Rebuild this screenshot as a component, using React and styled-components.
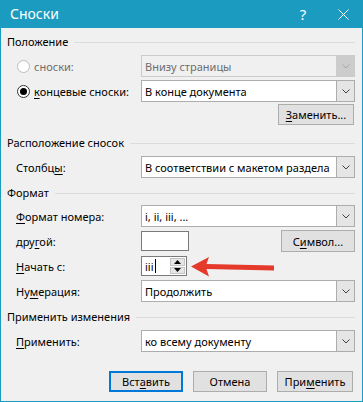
import React from "react"
import styled, { createGlobalStyle, css } from "styled-components"

const GlobalStyle = createGlobalStyle`
  html, body {
    margin: 0;
    padding: 0;
    background: #ffffff;
  }
  body {
    font-family: "Noto Sans", "Open Sans", sans-serif;
    font-size: 11px;
    color: #000;
  }
`

const accent = "#1a9bbf"

const Window = styled.div`
  position: relative;
  width: 363px;
  height: 402px;
  box-sizing: border-box;
  background: #f0f0f0;
  border: 1px solid ${accent};
  border-top: none;
  display: flex;
  flex-direction: column;
`

const TitleBar = styled.div`
  height: 28px;
  margin: 0 -1px;
  background: ${accent};
  color: #fff;
  display: flex;
  align-items: center;
  padding-left: 10px;
  font-size: 14px;
`

const Title = styled.div`
  flex: 1;
  margin-top: -1px;
`

const TitleButton = styled.div`
  width: ${({ w }) => w}px;
  height: 28px;
  display: flex;
  align-items: center;
  justify-content: center;
  font-size: 15px;
`

const Body = styled.div`
  padding: 7px 7px 0 6px;
  display: flex;
  flex-direction: column;
`

const GroupHeader = styled.div`
  display: flex;
  align-items: center;
  height: 14px;
  line-height: 14px;
  margin-top: ${({ mt }) => mt || 0}px;
  &::after {
    content: "";
    flex: 1;
    height: 1px;
    background: #dcdcdc;
    margin-left: 6px;
  }
`

const Row = styled.div`
  display: grid;
  grid-template-columns: 125px 214px;
  align-items: center;
  height: 22px;
  padding-left: 9px;
  margin-top: ${({ mt }) => mt || 0}px;
`

const Label = styled.div`
  display: flex;
  align-items: center;
  color: ${({ disabled }) => (disabled ? "#6d6d6d" : "#000")};
  white-space: nowrap;
  margin-left: ${({ ml }) => ml || 0}px;
`

const U = styled.span`
  text-decoration: underline;
  text-underline-offset: 2px;
`

const Radio = styled.span`
  width: 13px;
  height: 13px;
  box-sizing: border-box;
  border-radius: 50%;
  border: 1px solid ${({ disabled }) => (disabled ? "#bcbcbc" : "#333")};
  background: #fff;
  margin-right: 4px;
  display: flex;
  align-items: center;
  justify-content: center;
  &::after {
    content: "";
    width: 7px;
    height: 7px;
    border-radius: 50%;
    background: ${({ checked }) => (checked ? "#000" : "transparent")};
  }
`

const SelectBox = styled.div`
  height: 22px;
  box-sizing: border-box;
  display: flex;
  border: 1px solid ${({ disabled }) => (disabled ? "#cccccc" : "#adadad")};
  background: ${({ disabled }) => (disabled ? "#f0f0f0" : "#fff")};
  color: ${({ disabled }) => (disabled ? "#6d6d6d" : "#000")};
`

const SelectText = styled.div`
  flex: 1;
  padding-left: 3px;
  display: flex;
  align-items: center;
  white-space: nowrap;
  overflow: hidden;
`

const SelectArrow = styled.div`
  width: 17px;
  display: flex;
  align-items: center;
  justify-content: center;
  border-left: 1px solid ${({ disabled }) => (disabled ? "#cccccc" : "#adadad")};
  background: ${({ disabled }) => (disabled ? "#cccccc" : "#e5e5e5")};
  color: ${({ disabled }) => (disabled ? "#a8a8a8" : "#404040")};
`

const Chevron = () => (
  <svg width="8" height="5" viewBox="0 0 8 5">
    <path d="M0.5 0.5 L4 4 L7.5 0.5" fill="none" stroke="currentColor" strokeWidth="1" />
  </svg>
)

const Select = ({ value, disabled }) => (
  <SelectBox disabled={disabled}>
    <SelectText>{value}</SelectText>
    <SelectArrow disabled={disabled}>
      <Chevron />
    </SelectArrow>
  </SelectBox>
)

const ButtonRow = styled.div`
  display: flex;
  justify-content: flex-end;
  gap: ${({ gap }) => gap || 0}px;
  margin-top: ${({ mt }) => mt || 0}px;
  padding-right: ${({ pr }) => pr || 0}px;
`

const Button = styled.div`
  width: ${({ w }) => w || 74}px;
  height: ${({ h }) => h || 21}px;
  box-sizing: border-box;
  display: flex;
  align-items: center;
  justify-content: center;
  background: #e1e1e1;
  border: 1px solid #adadad;
  ${({ primary }) =>
    primary &&
    css`
      border: 2px solid #0078d7;
    `}
`

const Control = styled.div`
  display: flex;
  align-items: center;
  justify-content: space-between;
`

const TextBox = styled.div`
  width: ${({ w }) => w}px;
  height: ${({ h }) => h}px;
  box-sizing: border-box;
  border: 1px solid #7a7a7a;
  background: #fff;
  display: flex;
  align-items: center;
`

const SpinText = styled.div`
  flex: 1;
  padding-left: 3px;
  display: flex;
  align-items: center;
  &::after {
    content: "";
    width: 1px;
    height: 14px;
    background: #000;
    margin-left: 1px;
  }
`

const SpinButtons = styled.div`
  width: 15px;
  height: 16px;
  margin-right: 1px;
  display: flex;
  flex-direction: column;
  gap: 1px;
`

const SpinButton = styled.div`
  flex: 1;
  background: #e5e5e5;
  border: 1px solid #c4c4c4;
  display: flex;
  align-items: center;
  justify-content: center;
`

const Tri = ({ up }) => (
  <svg width="7" height="4" viewBox="0 0 7 4">
    <path d={up ? "M0 4 L3.5 0 L7 4 Z" : "M0 0 L3.5 4 L7 0 Z"} fill="#000" />
  </svg>
)

const ArrowNote = styled.svg`
  position: absolute;
  left: 188px;
  top: 254px;
`

const Close = () => (
  <svg width="11" height="11" viewBox="0 0 11 11">
    <path d="M0.5 0.5 L10.5 10.5 M10.5 0.5 L0.5 10.5" stroke="#fff" strokeWidth="1" />
  </svg>
)

export default function App() {
  return (
    <>
      <GlobalStyle />
      <Window>
        <TitleBar>
          <Title>Сноски</Title>
          <TitleButton w={40}>?</TitleButton>
          <TitleButton w={40}>
            <Close />
          </TitleButton>
        </TitleBar>
        <Body>
          <GroupHeader>Положение</GroupHeader>
          <Row mt={6}>
            <Label disabled ml={1}>
              <Radio disabled />
              сноски:
            </Label>
            <Select value="Внизу страницы" disabled />
          </Row>
          <Row mt={3}>
            <Label ml={1}>
              <Radio checked />
              <span>
                <U>к</U>онцевые сноски:
              </span>
            </Label>
            <Select value="В конце документа" />
          </Row>
          <ButtonRow mt={2} pr={1}>
            <Button w={76}>
              <span>
                <U>З</U>аменить...
              </span>
            </Button>
          </ButtonRow>

          <GroupHeader mt={11}>Расположение сносок</GroupHeader>
          <Row mt={6}>
            <Label>
              <span>
                Столбц<U>ы</U>:
              </span>
            </Label>
            <Select value="В соответствии с макетом раздела" />
          </Row>

          <GroupHeader mt={8}>Формат</GroupHeader>
          <Row mt={5}>
            <Label>
              <span>
                <U>Ф</U>ормат номера:
              </span>
            </Label>
            <Select value="i, ii, iii, ..." />
          </Row>
          <Row mt={3}>
            <Label>
              <span>
                дру<U>г</U>ой:
              </span>
            </Label>
            <Control>
              <TextBox w={48} h={20} />
              <Button w={74} h={22}>
                <span>
                  С<U>и</U>мвол...
                </span>
              </Button>
            </Control>
          </Row>
          <Row mt={3}>
            <Label>
              <span>
                <U>Н</U>ачать с:
              </span>
            </Label>
            <Control>
              <TextBox w={46} h={20}>
                <SpinText>iii</SpinText>
                <SpinButtons>
                  <SpinButton>
                    <Tri up />
                  </SpinButton>
                  <SpinButton>
                    <Tri />
                  </SpinButton>
                </SpinButtons>
              </TextBox>
            </Control>
          </Row>
          <Row mt={3}>
            <Label>
              <span>
                Ну<U>м</U>ерация:
              </span>
            </Label>
            <Select value="Продолжить" />
          </Row>

          <GroupHeader mt={8}>Применить изменения</GroupHeader>
          <Row mt={6}>
            <Label>
              <span>
                <U>П</U>рименить:
              </span>
            </Label>
            <Select value="ко всему документу" />
          </Row>

          <ButtonRow mt={19} gap={10} pr={2}>
            <Button primary>
              <span>
                Вст<U>а</U>вить
              </span>
            </Button>
            <Button>Отмена</Button>
            <Button w={76}>
              <span>
                При<U>м</U>енить
              </span>
            </Button>
          </ButtonRow>
        </Body>
        <ArrowNote width="88" height="24" viewBox="0 0 88 24">
          <path
            d="M2 12.5 L20 3 L17.5 10 L85 11.5 L85 16.5 L17.5 15 L20 22.5 Z"
            fill="#e5392c"
          />
        </ArrowNote>
      </Window>
    </>
  )
}
